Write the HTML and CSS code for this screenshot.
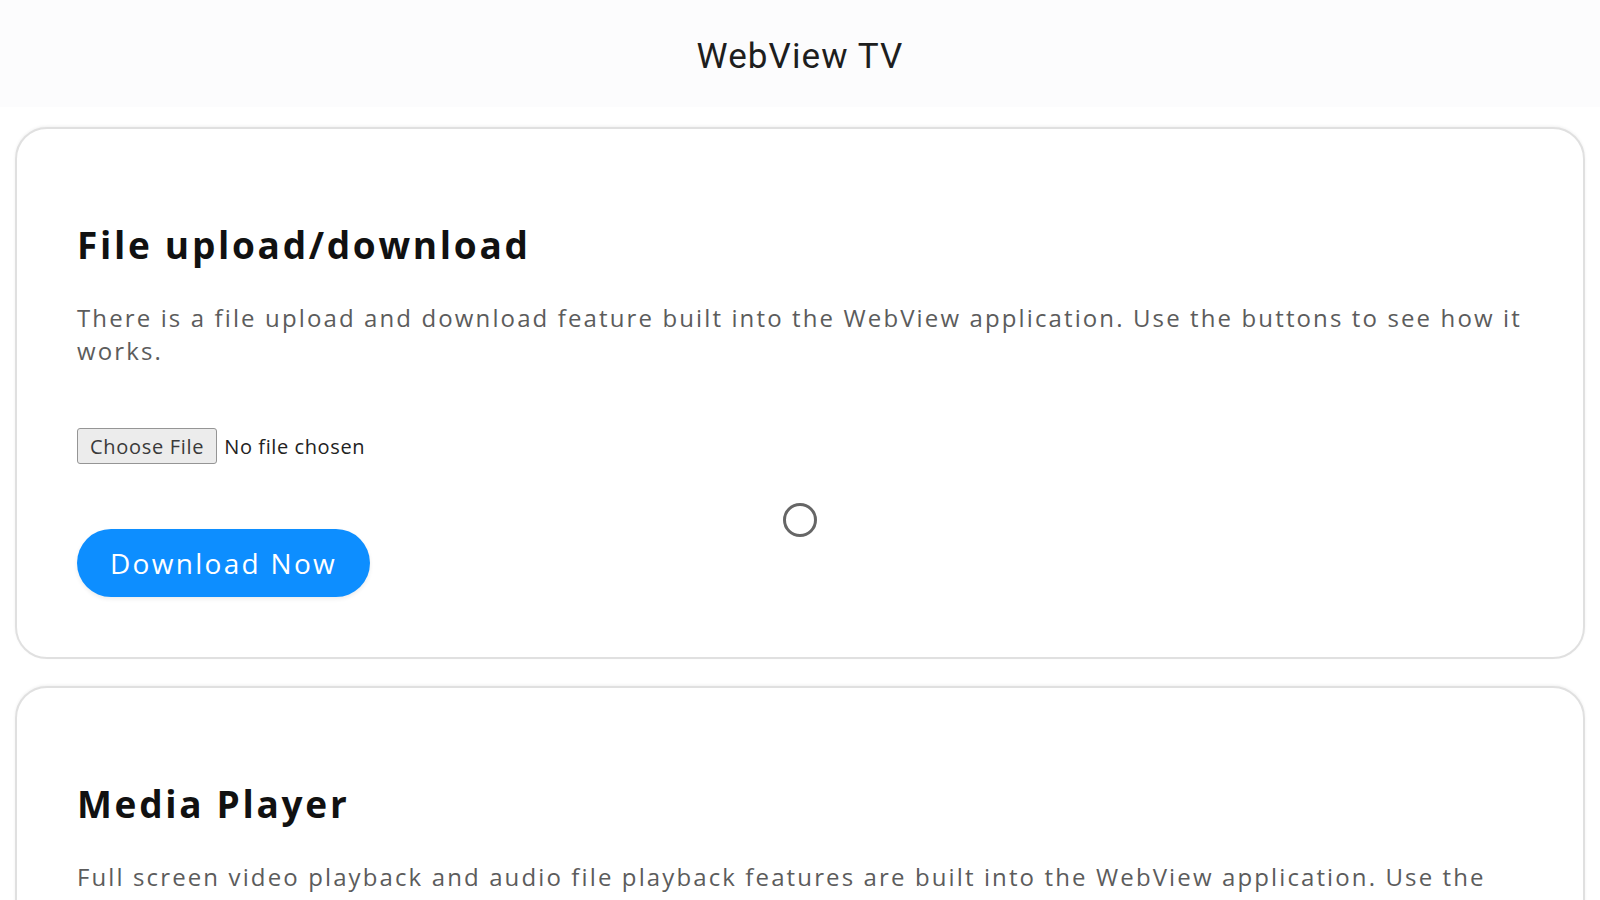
FILE: index.html
```html
<!DOCTYPE html>
<html lang="en">
<head>
<meta charset="utf-8">
<title>WebView TV</title>
<link rel="stylesheet" href="styles.css">
</head>
<body>
<header class="topbar">
  <h1 class="topbar-title">WebView TV</h1>
</header>
<main class="content">
  <section class="card">
    <h2 class="card-title">File upload/download</h2>
    <p class="card-text">There is a file upload and download feature built into the WebView application. Use the buttons to see how it works.</p>
    <div class="file-row">
      <button class="file-btn" type="button">Choose File</button>
      <span class="file-name">No file chosen</span>
    </div>
    <button class="primary-btn" type="button">Download Now</button>
  </section>
  <section class="card">
    <h2 class="card-title">Media Player</h2>
    <p class="card-text">Full screen video playback and audio file playback features are built into the WebView application. Use the buttons below to see how it works.</p>
  </section>
</main>
<div class="cursor"></div>
</body>
</html>
```
FILE: styles.css
```css
* { box-sizing: border-box; }
html, body { margin: 0; padding: 0; background: #ffffff; }
body { font-family: "Open Sans", "Noto Sans", sans-serif; overflow: hidden; height: 900px; }

.topbar {
  height: 107px;
  padding-top: 6px;
  background: #fcfcfd;
  display: flex;
  align-items: center;
  justify-content: center;
}
.topbar-title {
  margin: 0;
  font-family: Roboto, "Liberation Sans", sans-serif;
  font-weight: 400;
  font-size: 35px;
  color: #1e1e1e;
  letter-spacing: 1.1px;
}

.content {
  padding: 20px 15px 0;
  display: flex;
  flex-direction: column;
  gap: 27px;
}

.card {
  border: 2px solid #e0e0e0;
  border-radius: 32px;
  box-shadow: 0 -1px 3px rgba(0,0,0,0.06);
  padding: 90px 60px 60px;
  background: #fff;
}

.card-title {
  margin: 0;
  font-size: 37px;
  font-weight: 700;
  color: #111;
  letter-spacing: 2.7px;
  line-height: normal;
}

.card-text {
  margin: 31px 0 0;
  font-size: 24px;
  line-height: 33px;
  color: #5c5c5c;
  letter-spacing: 2.12px;
}

.file-row {
  margin-top: 61px;
  display: flex;
  align-items: center;
  gap: 7px;
}
.file-btn {
  font-family: "Open Sans", sans-serif;
  font-size: 20px;
  letter-spacing: 0.7px;
  height: 36px;
  padding: 0 12px;
  border: 1px solid #959595;
  border-radius: 3px;
  background: #ececec;
  color: #3a3a3a;
}
.file-name {
  font-size: 20px;
  letter-spacing: 0.6px;
  color: #222;
}

.primary-btn {
  display: block;
  margin-top: 65px;
  width: 293px;
  height: 68px;
  border: none;
  border-radius: 34px;
  background: #0d8eff;
  color: #fff;
  font-family: "Open Sans", sans-serif;
  font-size: 28px;
  letter-spacing: 2.3px;
  box-shadow: 0 2px 4px rgba(0,0,0,0.08);
}

.cursor {
  position: fixed;
  left: 783px;
  top: 503px;
  width: 34px;
  height: 34px;
  border: 3px solid #666;
  border-radius: 50%;
}
```
